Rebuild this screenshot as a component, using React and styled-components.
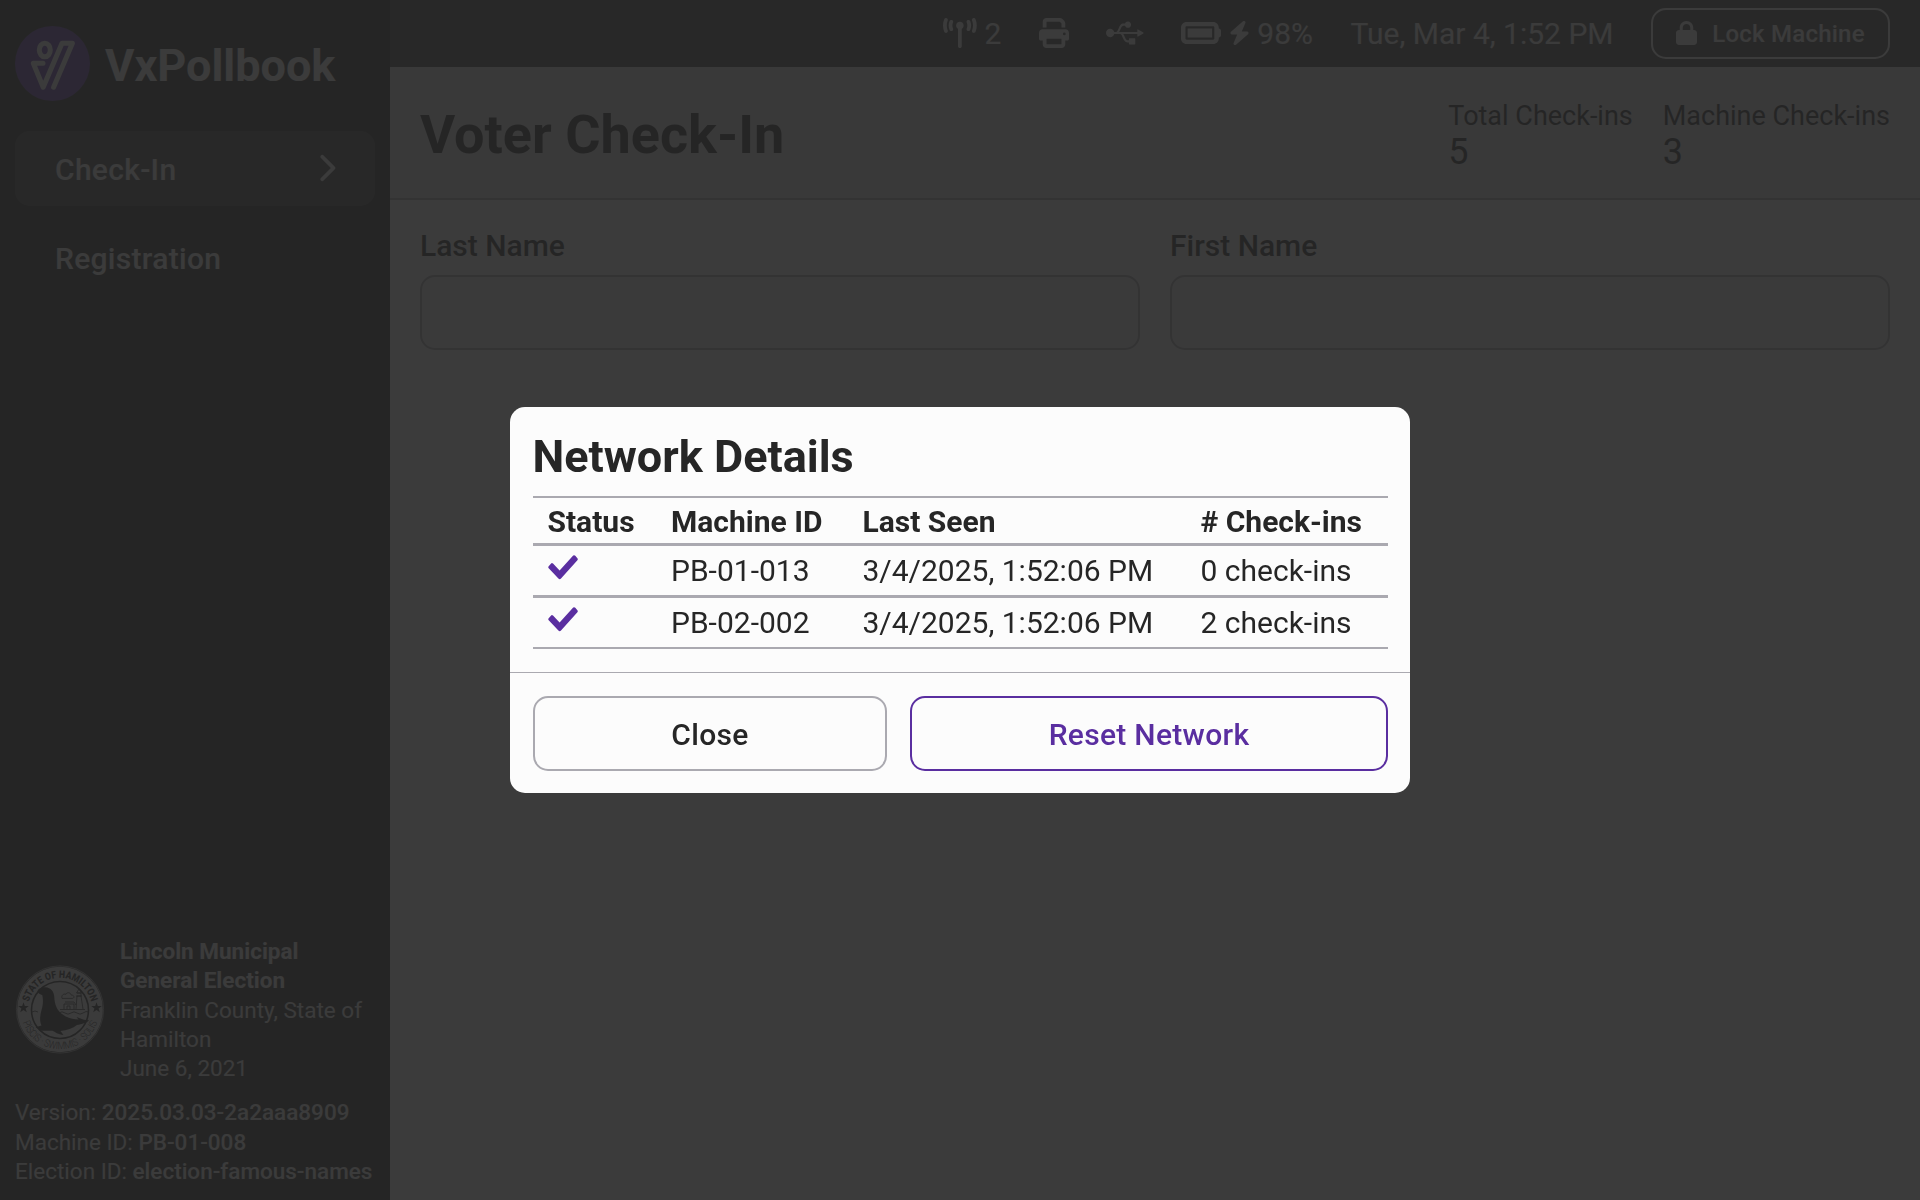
import React from 'react';
import styled, { createGlobalStyle } from 'styled-components';
import {
  FaTowerBroadcast, FaPrint, FaBatteryFull, FaBolt, FaLock, FaChevronRight,
} from 'react-icons/fa6';
import { FaUsb } from 'react-icons/fa';

const ink = '#262626';
const paper = '#fcfcfc';
const outline = '#aaa9b0';
const primary = '#5a2ea0';

const GlobalStyle = createGlobalStyle`
  * { box-sizing: border-box; }
  body {
    margin: 0;
    font-family: Roboto, "Liberation Sans", sans-serif;
    font-size: 30px;
    line-height: 1.3;
    color: ${ink};
    background: ${paper};
  }
  h1, h2, p { margin: 0; }
`;

const Screen = styled.div`
  display: flex;
  width: 100%;
  height: 100vh;
  overflow: hidden;
`;

const Sidebar = styled.aside`
  display: flex;
  flex-direction: column;
  flex: 0 0 390px;
  background: ${ink};
  color: ${paper};
`;

const Brand = styled.div`
  display: flex;
  align-items: center;
  gap: 15px;
  height: 131px;
  padding: 0 15px 4px;
  font-size: 45px;
  font-weight: 700;
`;

const BrandName = styled.span`
  padding-top: 5px;
`;

const NavList = styled.nav`
  display: flex;
  flex-direction: column;
  gap: 14px;
  padding: 0 15px;
`;

const NavItem = styled.a`
  display: flex;
  align-items: center;
  justify-content: space-between;
  height: 75px;
  padding: 2px 34px 0 40px;
  border-radius: 15px;
  font-weight: 500;
  letter-spacing: 0.01em;
  background: ${(p) => (p.$active ? '#444444' : 'transparent')};
`;

const NavArrow = styled(FaChevronRight)`
  width: 30px;
  height: 30px;
  margin-bottom: 3px;
`;

const SidebarFooter = styled.footer`
  display: flex;
  flex-direction: column;
  gap: 15px;
  margin-top: auto;
  padding: 0 15px 14px;
  font-size: 22.5px;
`;

const Election = styled.div`
  display: flex;
  align-items: center;
  gap: 15px;
`;

const Strong = styled.span`
  font-weight: ${(p) => p.$weight || 500};
`;

const Main = styled.main`
  display: flex;
  flex-direction: column;
  flex: 1;
  min-width: 0;
`;

const Toolbar = styled.div`
  display: flex;
  align-items: center;
  justify-content: flex-end;
  gap: 37.5px;
  height: 67px;
  padding-right: 30px;
  background: #444444;
  color: ${paper};
`;

const ToolItem = styled.div`
  display: flex;
  align-items: center;
  gap: 7.5px;
  white-space: nowrap;
`;

const ToolIcon = styled.span`
  display: flex;
  flex: none;
  margin-bottom: 1px;

  svg {
    width: ${(p) => p.$width}px;
    height: ${(p) => p.$height}px;
  }
`;

const LockButton = styled.button`
  display: flex;
  align-items: center;
  justify-content: center;
  gap: 15px;
  width: 239px;
  height: 51px;
  padding: 0;
  border: 2px solid ${paper};
  border-radius: 15px;
  background: transparent;
  color: ${paper};
  font: 500 24px Roboto, sans-serif;
  letter-spacing: 0.01em;
`;

const Header = styled.header`
  display: flex;
  align-items: center;
  justify-content: space-between;
  height: 133px;
  padding: 4px 30px 0;
  border-bottom: 2px solid ${outline};
  background: #e4e4e6;
`;

const PageTitle = styled.h1`
  padding-top: 2px;
  font-size: 54px;
  font-weight: 700;
  line-height: 1.3;
`;

const Stats = styled.div`
  display: flex;
  gap: 30px;
`;

const Stat = styled.div`
  font-size: 27px;
  line-height: 35px;
`;

const StatValue = styled.div`
  font-size: 36px;
  line-height: 36px;
`;

const SearchForm = styled.div`
  display: grid;
  grid-template-columns: 1fr 1fr;
  gap: 30px;
  padding: 26px 30px;
`;

const Field = styled.label`
  display: flex;
  flex-direction: column;
  gap: 10px;
  font-weight: 500;
`;

const Input = styled.input`
  width: 100%;
  height: 75px;
  border: 2px solid ${outline};
  border-radius: 15px;
  background: #f4f4f5;
`;

const Overlay = styled.div`
  position: fixed;
  inset: 0;
  display: flex;
  align-items: center;
  justify-content: center;
  background: rgba(38, 38, 38, 0.9);
`;

const Modal = styled.div`
  width: 900px;
  border-radius: 15px;
  background: ${paper};
`;

const ModalBody = styled.div`
  padding: 21px 22.5px 23px;
`;

const ModalTitle = styled.h2`
  font-size: 45px;
  font-weight: 700;
  line-height: 58px;
  margin-bottom: 10px;
`;

const Table = styled.table`
  width: 100%;
  border-collapse: collapse;
  table-layout: fixed;
  border-top: 2px solid ${outline};
  border-bottom: 2px solid ${outline};
`;

const Row = styled.tr`
  height: ${(p) => p.$height}px;
  border-top: ${(p) => (p.$ruled ? 3 : 0)}px solid ${outline};
`;

const HeadCell = styled.th`
  width: ${(p) => p.$width};
  padding: 2px 0 0 15px;
  font-weight: 700;
  text-align: left;
`;

const Cell = styled.td`
  padding: 0 0 0 15px;
  white-space: nowrap;
`;

const ModalActions = styled.div`
  display: flex;
  gap: 23px;
  padding: 23px 22px 22px 23px;
  border-top: 1px solid ${outline};
`;

const Button = styled.button`
  flex: 0 0 ${(p) => p.$width}px;
  height: 75px;
  padding: 2px 0 0;
  border: 2px solid ${(p) => (p.$primary ? primary : outline)};
  border-radius: 15px;
  background: transparent;
  color: ${(p) => (p.$primary ? primary : ink)};
  font: 500 30px Roboto, sans-serif;
  letter-spacing: 0.01em;
`;

const CheckSvg = styled.svg`
  display: block;
  margin-top: -5px;
`;

function Logo() {
  return (
    <svg width="75" height="75" viewBox="0 0 75 75">
      <circle cx="37.5" cy="37.5" r="37.5" fill="#6638b6" />
      <g fill="none" stroke={paper} strokeWidth="5" strokeLinecap="round" strokeLinejoin="round">
        <ellipse cx="29.8" cy="24" rx="5.5" ry="6.8" />
        <path d="M28 37.2H18.3L28.2 61.2L47 17.3H57.4L38.6 61.2" />
      </g>
    </svg>
  );
}

function Seal() {
  return (
    <svg width="90" height="90" viewBox="0 0 90 90">
      <circle cx="45" cy="44.5" r="42.8" fill={paper} />
      <circle cx="45" cy="44.5" r="43.6" fill="none" stroke={paper} strokeWidth="0.6" />
      <circle cx="45" cy="45" r="28.5" fill="none" stroke={ink} strokeWidth="1.6" />
      <defs>
        <path id="sealTop" d="M12.8 45A32.2 32.2 0 0 1 77.2 45" />
        <path id="sealBottom" d="M5.8 45A39.2 39.2 0 0 0 84.2 45" />
      </defs>
      <text fill={ink} fontFamily="Roboto" fontSize="10.4" fontWeight="900" textAnchor="middle" textLength="85" lengthAdjust="spacingAndGlyphs">
        <textPath href="#sealTop" startOffset="50%">STATE OF HAMILTON</textPath>
      </text>
      <text fill={ink} fontFamily="Roboto" fontSize="10.4" fontWeight="300" textAnchor="middle" textLength="98" lengthAdjust="spacingAndGlyphs">
        <textPath href="#sealBottom" startOffset="50%">PISCIS · SWIMMIS · SOLIS</textPath>
      </text>
      <g fill={ink}>
        <path d="M8.5 37.3l1.3 3.7h4l-3.2 2.4 1.2 3.9-3.3-2.4-3.3 2.4 1.2-3.9-3.2-2.4h4z" />
        <path d="M81.5 37.3l1.3 3.7h4l-3.2 2.4 1.2 3.9-3.3-2.4-3.3 2.4 1.2-3.9-3.2-2.4h4z" />
        <path d="M22.4 26.5C23 23.7 26 22 30.5 22.2C36 22.5 39 26.5 39.3 32C39.5 39 42 45.5 47 49C53 53.5 59 54.5 63.5 54.5L61.5 52L69 54.8L74 55.2C72 58 67 59 62 60C58 63 52 65.5 45.5 66L48.5 70C43 69.8 40 66.8 37.5 65.8C33.5 65.6 27.5 66.2 25 65.2L20.5 62.2L26.5 60.5C24.3 56 25 50 26.5 45C28.3 39.5 28.2 34 27.3 30.2C25.5 29.5 22.8 28.5 22.4 26.5Z" />
      </g>
      <g fill="none" stroke={ink} strokeWidth="0.8">
        <path d="M17 47q3-2 6 0M44 48q3-2.4 6 0t6 0 6 0 6 0 6-1" />
        <path d="M47 33.4h10c3 0 2.4-3.6-.8-3.3-.6-3-4.6-3-5.2-.8-2.6-.8-4.8.8-4 4.1z" />
        <path d="M45 44.5h25M49 44v-5h10v5M50 37h9l2 3M52 44v-3h3v3M61 44l1-13h4l2 13M61 31h6M62 28h4v3M64 24l2.5 4h-5z" />
      </g>
    </svg>
  );
}

function Check() {
  return (
    <CheckSvg width="30" height="25" viewBox="0 0 30 25">
      <path fill={primary} d="M25.2.6Q26.3-.3 27.3.8L29.4 3.2Q30.2 4.2 29.4 5.2L13 23.6Q11.7 24.9 10.4 23.6L.7 13.2Q-.2 12.2.7 11.2L3.1 8.4Q4 7.6 5 8.6L11.6 15.6Z" />
    </CheckSvg>
  );
}

const machines = [
  { id: 'PB-01-013', seen: '3/4/2025, 1:52:06 PM', count: '0 check-ins' },
  { id: 'PB-02-002', seen: '3/4/2025, 1:52:06 PM', count: '2 check-ins' },
];

export default function App() {
  return (
    <>
      <GlobalStyle />
      <Screen>
        <Sidebar>
          <Brand><Logo /><BrandName>VxPollbook</BrandName></Brand>
          <NavList>
            <NavItem $active>Check-In<NavArrow /></NavItem>
            <NavItem>Registration</NavItem>
          </NavList>
          <SidebarFooter>
            <Election>
              <Seal />
              <div>
                <Strong $weight={700}>Lincoln Municipal<br />General Election</Strong><br />
                Franklin County, State of<br />Hamilton<br />June 6, 2021
              </div>
            </Election>
            <div>
              <div>Version: <Strong>2025.03.03-2a2aaa8909</Strong></div>
              <div>Machine ID: <Strong>PB-01-008</Strong></div>
              <div>Election ID: <Strong>election-famous-names</Strong></div>
            </div>
          </SidebarFooter>
        </Sidebar>
        <Main>
          <Toolbar>
            <ToolItem>
              <ToolIcon $width={33.75} $height={30}><FaTowerBroadcast /></ToolIcon>2
            </ToolItem>
            <ToolItem>
              <ToolIcon $width={30} $height={30}><FaPrint /></ToolIcon>
            </ToolItem>
            <ToolItem>
              <ToolIcon $width={37.5} $height={30}><FaUsb /></ToolIcon>
            </ToolItem>
            <ToolItem>
              <ToolIcon $width={40} $height={36}><FaBatteryFull /></ToolIcon>
              <ToolIcon $width={21} $height={24}><FaBolt /></ToolIcon>
              98%
            </ToolItem>
            <ToolItem>Tue, Mar 4, 1:52 PM</ToolItem>
            <LockButton>
              <ToolIcon $width={21} $height={24}><FaLock /></ToolIcon>
              Lock Machine
            </LockButton>
          </Toolbar>
          <Header>
            <PageTitle>Voter Check-In</PageTitle>
            <Stats>
              <Stat>Total Check-ins<StatValue>5</StatValue></Stat>
              <Stat>Machine Check-ins<StatValue>3</StatValue></Stat>
            </Stats>
          </Header>
          <SearchForm>
            <Field>Last Name<Input /></Field>
            <Field>First Name<Input /></Field>
          </SearchForm>
        </Main>
      </Screen>
      <Overlay>
        <Modal role="dialog">
          <ModalBody>
            <ModalTitle>Network Details</ModalTitle>
            <Table>
              <thead>
                <Row $height={47}>
                  <HeadCell $width="123.5px">Status</HeadCell>
                  <HeadCell $width="191.5px">Machine ID</HeadCell>
                  <HeadCell $width="338px">Last Seen</HeadCell>
                  <HeadCell># Check-ins</HeadCell>
                </Row>
              </thead>
              <tbody>
                {machines.map((m) => (
                  <Row key={m.id} $height={52} $ruled>
                    <Cell><Check /></Cell>
                    <Cell>{m.id}</Cell>
                    <Cell>{m.seen}</Cell>
                    <Cell>{m.count}</Cell>
                  </Row>
                ))}
              </tbody>
            </Table>
          </ModalBody>
          <ModalActions>
            <Button $width={354}>Close</Button>
            <Button $width={478} $primary>Reset Network</Button>
          </ModalActions>
        </Modal>
      </Overlay>
    </>
  );
}
